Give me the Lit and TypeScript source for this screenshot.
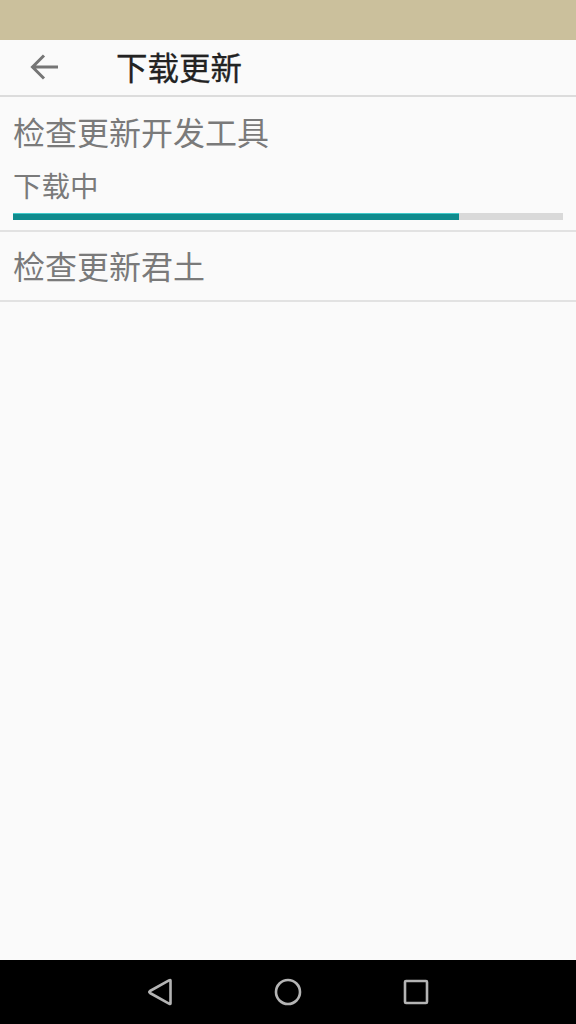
import { LitElement, html, css } from "lit";
import { customElement } from "lit/decorators.js";

@customElement("app-root")
export class AppRoot extends LitElement {
  static styles = css`
    :host {
      display: flex;
      flex-direction: column;
      height: 1024px;
      width: 576px;
      background: #fafafa;
      font-family: "Noto Sans CJK SC", "Noto Sans", sans-serif;
      overflow: hidden;
    }
    .status { height: 40px; flex: none; background: #cbc09c; }
    .bar {
      height: 55px; flex: none; display: flex; align-items: center;
      border-bottom: 2px solid #dcdcdc; padding-left: 30px; box-sizing: content-box;
    }
    .back { width: 30px; height: 30px; flex: none; margin-top: -2px; }
    .title {
      margin-left: 56px; margin-top: -4px; font-size: 31.5px; line-height: 40px; color: #222; font-weight: 400;
      -webkit-text-stroke: 0.3px #222;
    }
    .main { flex: 1; display: flex; flex-direction: column; }
    .row { border-bottom: 2px solid #e2e2e2; padding: 0 13px; color: #7a7a7a; }
    .row.first { height: 133px; }
    .row.second { height: 68px; }
    .name { font-size: 32px; line-height: 40px; padding-top: 14px; }
    .second .name { padding-top: 13px; }
    .state { font-size: 28.5px; line-height: 36px; margin-top: 16px; }
    .track { height: 7px; background: #d9d9d9; margin-top: 10px; }
    .fill { height: 100%; background: #0f8b8d; border-top: 1px solid #3fc9c9; box-sizing: border-box; }
    .nav {
      height: 64px; flex: none; background: #000; display: grid;
      grid-template-columns: repeat(3, 128px); justify-content: center; align-items: center; justify-items: center;
    }
    .nav svg { width: 32px; height: 32px; display: block; }
    .nav * { stroke-linejoin: round; }
  `;

  render() {
    return html`
      <div class="status"></div>
      <div class="bar">
        <svg class="back" viewBox="0 0 30 30" fill="none" stroke="#757575" stroke-width="3">
          <path d="M28 15H3M14 3.5 2.5 15 14 26.5" />
        </svg>
        <div class="title">下载更新</div>
      </div>
      <div class="main">
        <div class="row first">
          <div class="name">检查更新开发工具</div>
          <div class="state">下载中</div>
          <div class="track"><div class="fill" style="width:${(446 / 550) * 100}%"></div></div>
        </div>
        <div class="row second"><div class="name">检查更新君土</div></div>
      </div>
      <div class="nav">
        <svg viewBox="0 0 32 32" fill="none" stroke="#b4b4b4" stroke-width="2.6">
          <path d="M26.5 4.5V27.5Q26.5 28.5 25 27.7L6 17Q4.5 16 6 15L25 4.3Q26.5 3.5 26.5 4.5Z" />
        </svg>
        <svg viewBox="0 0 32 32" fill="none" stroke="#b4b4b4" stroke-width="2.6">
          <circle cx="16" cy="16" r="12" />
        </svg>
        <svg viewBox="0 0 32 32" fill="none" stroke="#b4b4b4" stroke-width="2.6">
          <rect x="5" y="5" width="22" height="22" rx="1" />
        </svg>
      </div>
    `;
  }
}
